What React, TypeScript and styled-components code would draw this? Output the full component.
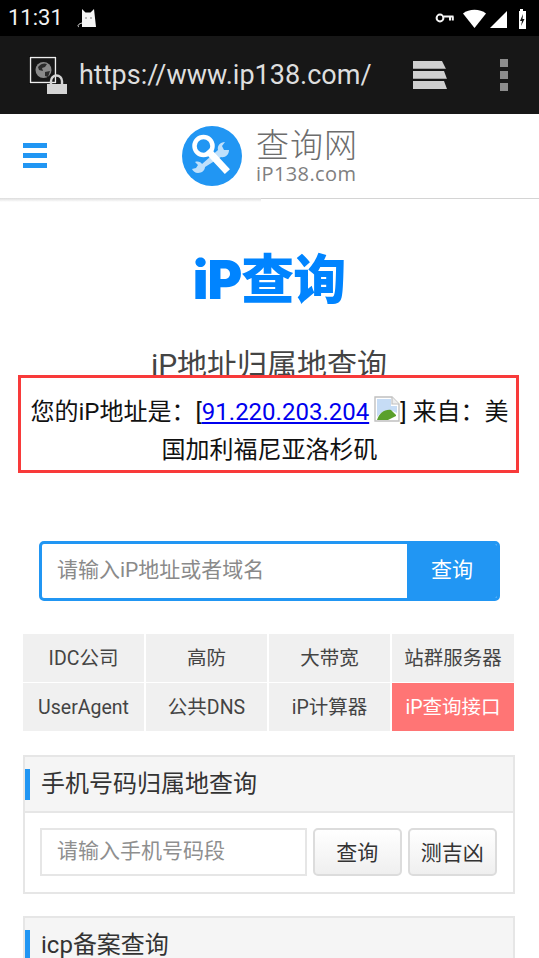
import React from "react";
import styled, { createGlobalStyle } from "styled-components";

const FONT = `Roboto, "Noto Sans CJK SC", sans-serif`;

const Global = createGlobalStyle`
  html, body { margin: 0; padding: 0; background: #fff; }
  body { width: 539px; height: 958px; overflow: hidden; font-family: ${FONT}; }
  * { box-sizing: border-box; }
`;

const Screen = styled.div`width: 539px; height: 958px; overflow: hidden; display: flex; flex-direction: column;`;

const StatusBar = styled.div`
  height: 36px; background: #000; color: #f2f2f2; display: flex; align-items: center;
  padding: 0 9px 0 8px; flex: none;
`;
const Clock = styled.span`font-size: 22px; line-height: 36px; width: 69px; letter-spacing: 0;`;
const StatusRight = styled.div`margin-left: auto; display: flex; align-items: center;`;

const BrowserBar = styled.div`
  height: 78px; background: #171717; display: flex; align-items: center; flex: none; padding-left: 29px;
`;
const Url = styled.span`font-size: 27px; color: #dedede; margin-left: 12px; width: 333px; white-space: nowrap;`;

const SiteHeader = styled.header`
  height: 85px; flex: none; background: #fff; display: flex; align-items: center; padding-left: 23px;
  border-bottom: 1px solid #d4d4d4; position: relative;
  &::after {
    content: ""; position: absolute; left: 0; top: 84px; width: 261px; height: 4px;
    background: linear-gradient(#dcdcdc, #fff);
  }
`;
const Burger = styled.div`width: 24px; display: flex; flex-direction: column; gap: 5px; margin-top: -1px;`;
const BurgerBar = styled.i`display: block; height: 5px; background: #2196f3;`;
const Logo = styled.div`display: flex; align-items: center; margin-left: 135px; margin-top: -1px;`;
const LogoText = styled.div`margin-left: 14px; display: flex; flex-direction: column; color: #6d6d6d; width: 100px;`;
const LogoCn = styled.span`font-size: 33px; line-height: 36px; font-weight: 300; letter-spacing: 1px; white-space: nowrap;`;
const LogoEn = styled.span`font-size: 20px; line-height: 20px; letter-spacing: 0.4px; color: #808080; font-family: "Open Sans", sans-serif; white-space: nowrap;`;

const Main = styled.main`flex: 1; display: flex; flex-direction: column; align-items: center; padding: 0 24px 0 23px;`;
const BigTitle = styled.h1`
  margin: 46px 0 0; font-size: 53px; line-height: 70px; font-weight: 900; color: #0084ff; white-space: nowrap;
  font-family: Inter, "Noto Sans CJK SC", sans-serif; letter-spacing: -1px;
`;
const SubTitle = styled.h2`
  margin: 30px 0 0; font-size: 30px; line-height: 40px; font-weight: 400; color: #444; white-space: nowrap;
`;
const InfoBox = styled.div`
  position: relative; width: 501px; height: 98px; margin: -10px 1px 0 0; border: 3px solid #f83a3a; background: #fff;
  font-size: 24px; line-height: 38px; color: #111; text-align: center; padding: 15px 5px 0 7px;
`;
const IpLink = styled.a`color: #0000ee; text-decoration: underline;`;
const BrokenImg = styled.svg`vertical-align: -2px; margin: 0 0 0 5px;`;

const SearchBox = styled.form`
  margin-top: 68px; width: 461px; height: 60px; border: 3px solid #2196f3; border-radius: 5px;
  display: flex; overflow: hidden; flex: none; margin-right: -1px;
`;
const SearchHint = styled.div`flex: 1; font-size: 21px; line-height: 52px; color: #8a8a8a; padding-left: 15px;`;
const SearchBtn = styled.div`width: 90px; background: #2196f3; color: #fff; font-size: 21px; line-height: 52px; text-align: center;`;

const LinkGrid = styled.div`
  margin-top: 33px; width: 492px; display: grid; grid-template-columns: repeat(3, 121px) 122px; gap: 1px 2px; flex: none;
`;
const LinkCell = styled.div<{ $hot?: boolean }>`
  height: 48px; background: ${p => (p.$hot ? "#ff7575" : "#f0f0f0")}; color: ${p => (p.$hot ? "#fff" : "#444")};
  font-size: 19.5px; line-height: 50px; text-align: center; white-space: nowrap;
`;

const Panel = styled.section`
  width: 492px; border: 2px solid #e6e6e6; flex: none; margin-top: 24px; &:last-child { margin-top: 22px; }
`;
const PanelHead = styled.div`
  height: 56px; background: #f5f5f5; border-bottom: 2px solid #e6e6e6; display: flex; align-items: center;
  font-size: 24px; color: #333; padding-bottom: 5px;
`;
const Accent = styled.i`width: 5px; height: 31px; background: #2196f3; margin: 5px 11px 0 0;`;
const PanelBody = styled.div`height: 79px; display: flex; padding: 15px 15px 0 15px; gap: 5.5px;`;
const TextInput = styled.div`
  width: 267px; height: 48px; border: 2px solid #e6e6e6; font-size: 21px; line-height: 43px; color: #8f8f8f; padding-left: 15px; flex: none;
`;
const GrayBtn = styled.div`
  width: 89.5px; height: 48px; border: 2px solid #dcdcdc; border-radius: 5px; text-align: center;
  background: linear-gradient(#fff, #efefef); font-size: 21px; line-height: 47px; color: #333; flex: none;
`;

const Cat = () => (
  <svg width="20" height="20" viewBox="0 0 20 20">
    <path d="M5 19V1l3.5 3.5h5L17 1l2 18z" fill="#f5f5f5" />
    <path d="M5 15C1 16 0 18 2 19" fill="none" stroke="#ddd" strokeWidth="1" />
    <circle cx="9" cy="10" r=".7" fill="#555" /><circle cx="14" cy="10" r=".7" fill="#555" />
  </svg>
);

const StatusIcons = () => (
  <svg width="95" height="24" viewBox="0 0 95 24">
    <g fill="none" stroke="#f5f5f5" strokeWidth="2">
      <circle cx="5" cy="12" r="3.4" />
      <path d="M8.5 10.5H18.5M15 10.5v4M17.8 10.5v4" />
    </g>
    <path d="M28 7.5C34 2.5 45 2.5 51 7.5L39.5 22z" fill="#fff" />
    <path d="M72 5V22H55z" fill="#fff" />
    <path d="M85 5V3h3v2h3v18H84V5z" fill="#fff" />
    <path d="M88 8l-3 7h2l-1 5 3.5-7h-2z" fill="#111" />
  </svg>
);

const SiteIcon = () => (
  <svg width="38" height="38" viewBox="0 0 38 38" style={{ flex: "none" }}>
    <rect x="0" y="0" width="28" height="28" fill="#000" />
    <rect x="1.5" y="1.5" width="25" height="25" fill="#171717" stroke="#eee" strokeWidth="1.4" />
    <circle cx="14.5" cy="14" r="8" fill="#8a8a8a" />
    <path d="M9 11c3-4 7-4 9-3l-2 3-3 1 1 3-4-1zM16 16l5-1-2 6-3-1z" fill="#2b2b2b" />
    <path d="M22 29v-4a5.5 5.5 0 0 1 11 0v4" fill="none" stroke="#d4d4d4" strokeWidth="2.4" />
    <rect x="18" y="28" width="20" height="10" fill="#d4d4d4" />
  </svg>
);

const TabsIcon = () => (
  <svg width="37" height="30" viewBox="0 0 37 30" style={{ flex: "none" }}>
    <path d="M1 1h29l4 8H1z" fill="#cfcfcf" />
    <path d="M1 11h31l3 8H1z" fill="#cfcfcf" />
    <path d="M1 21H32l3 8H1z" fill="#cfcfcf" />
    <path d="M1 9.5h33M1 19.5h34" stroke="#171717" strokeWidth="1.6" />
  </svg>
);

const MenuDots = () => (
  <svg width="8" height="32" viewBox="0 0 8 32" style={{ marginLeft: 51, flex: "none" }}>
    <rect y="0" width="8" height="8" fill="#8c8c8c" />
    <rect y="12" width="8" height="8" fill="#8c8c8c" />
    <rect y="24" width="8" height="8" fill="#8c8c8c" />
  </svg>
);

const LogoMark = () => (
  <svg width="60" height="60" viewBox="0 0 60 60" style={{ flex: "none" }}>
    <circle cx="30" cy="30" r="30" fill="#2196f3" />
    <path d="M16 47c-3 0-5-2-6-4l4-1 2-3-3-3c3-1 6 0 7 2l16-14c-1-4 2-8 7-8l-3 4 2 4 5 0c0 5-4 8-8 7L23 41c0 3-3 6-7 6z" fill="#bfe0fb" />
    <circle cx="21.5" cy="20" r="9" fill="#2196f3" stroke="#fff" strokeWidth="4.5" />
    <path d="M28 27l15 16" stroke="#fff" strokeWidth="7" strokeLinecap="square" />
  </svg>
);

const Broken = () => (
  <BrokenImg width="26" height="26" viewBox="0 0 26 26">
    <path d="M1 1h17l7 7v17H1z" fill="#fff" stroke="#c0c0c0" strokeWidth="1.4" />
    <path d="M18 1v7h7" fill="#eee" stroke="#c0c0c0" strokeWidth="1.2" />
    <path d="M3 3h14v7h6v7C15 12 8 15 3 21z" fill="#c6dcf5" />
    <path d="M3 24c2-7 8-11 14-10l5 5v1l-8 4z" fill="#5aa02c" />
  </BrokenImg>
);

export default function App() {
  return (
    <Screen>
      <Global />
      <StatusBar>
        <Clock>11:31</Clock>
        <Cat />
        <StatusRight><StatusIcons /></StatusRight>
      </StatusBar>
      <BrowserBar>
        <SiteIcon />
        <Url>https://www.ip138.com/</Url>
        <TabsIcon />
        <MenuDots />
      </BrowserBar>
      <SiteHeader>
        <Burger><BurgerBar /><BurgerBar /><BurgerBar /></Burger>
        <Logo>
          <LogoMark />
          <LogoText>
            <LogoCn>查询网</LogoCn>
            <LogoEn>iP138.com</LogoEn>
          </LogoText>
        </Logo>
      </SiteHeader>
      <Main>
        <BigTitle>iP查询</BigTitle>
        <SubTitle>iP地址归属地查询</SubTitle>
        <InfoBox>
          您的iP地址是：[<IpLink href="#">91.220.203.204</IpLink><Broken />] 来自：美国加利福尼亚洛杉矶
        </InfoBox>
        <SearchBox>
          <SearchHint>请输入iP地址或者域名</SearchHint>
          <SearchBtn>查询</SearchBtn>
        </SearchBox>
        <LinkGrid>
          <LinkCell>IDC公司</LinkCell>
          <LinkCell>高防</LinkCell>
          <LinkCell>大带宽</LinkCell>
          <LinkCell>站群服务器</LinkCell>
          <LinkCell>UserAgent</LinkCell>
          <LinkCell>公共DNS</LinkCell>
          <LinkCell>iP计算器</LinkCell>
          <LinkCell $hot>iP查询接口</LinkCell>
        </LinkGrid>
        <Panel>
          <PanelHead><Accent />手机号码归属地查询</PanelHead>
          <PanelBody>
            <TextInput>请输入手机号码段</TextInput>
            <GrayBtn>查询</GrayBtn>
            <GrayBtn>测吉凶</GrayBtn>
          </PanelBody>
        </Panel>
        <Panel>
          <PanelHead><Accent />icp备案查询</PanelHead>
        </Panel>
      </Main>
    </Screen>
  );
}
